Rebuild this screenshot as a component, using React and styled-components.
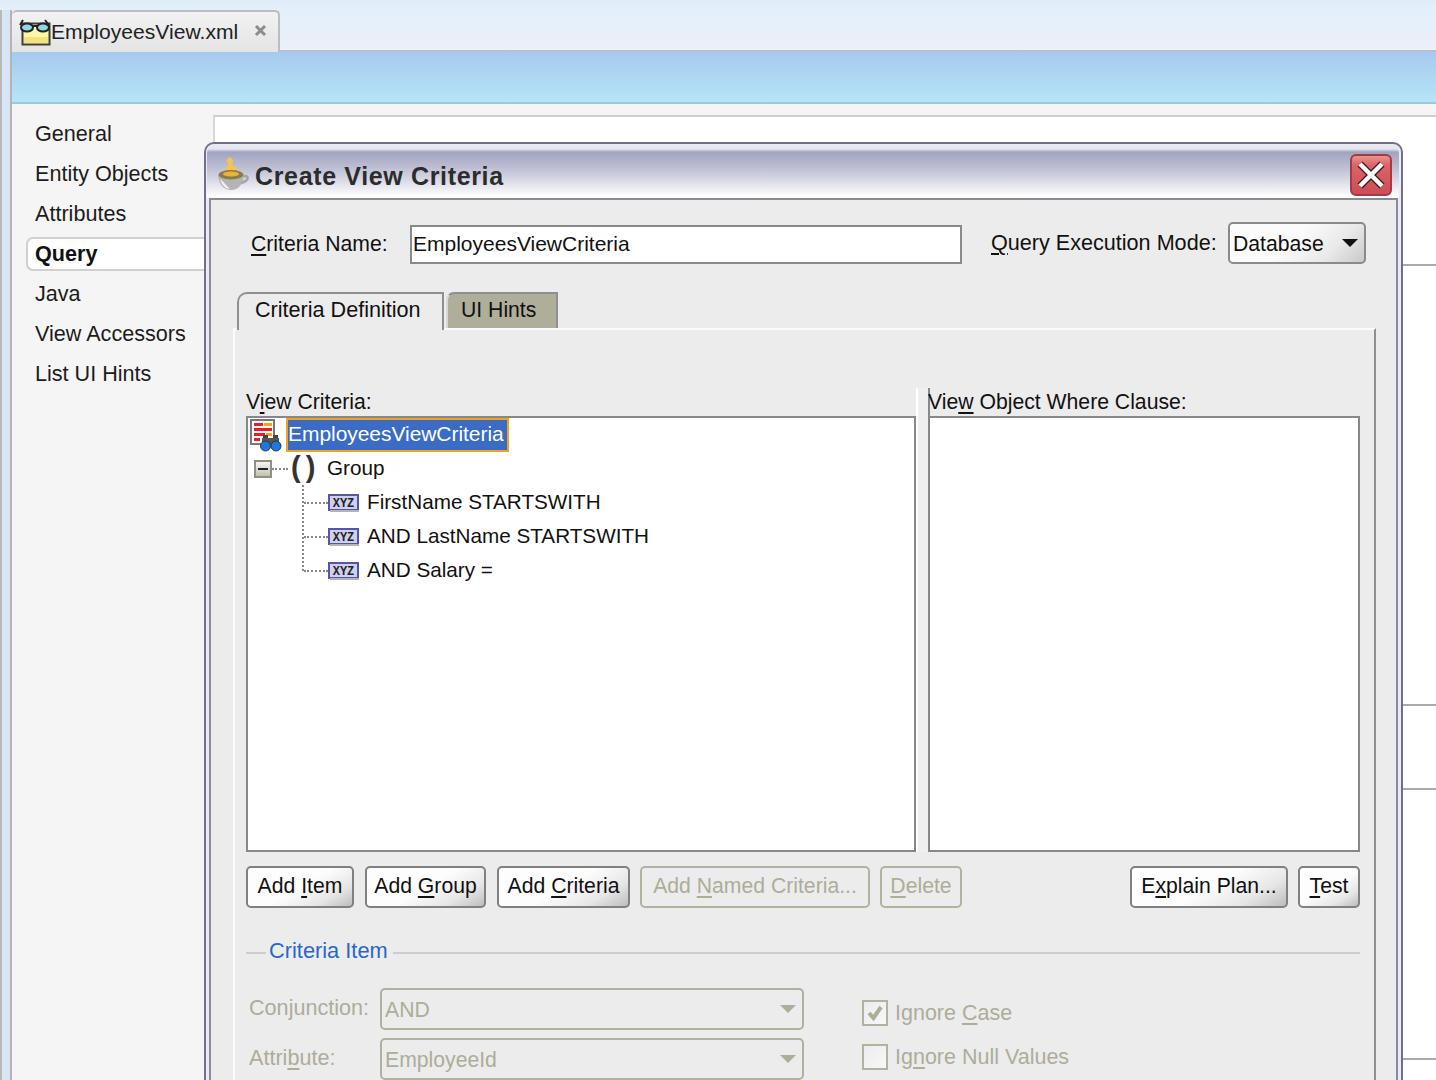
import React from "react";
import styled, { createGlobalStyle } from "styled-components";

const Global = createGlobalStyle`
  html, body { margin: 0; padding: 0; background: #f5f5f5; }
  body { width: 1436px; height: 1080px; overflow: hidden; font-family: "Liberation Sans", Arial, sans-serif; font-size: 21.2px; color: #111; }
  * { box-sizing: border-box; }
  u { text-underline-offset: 3px; text-decoration-thickness: 2px; }
`;

const Page = styled.div`
  position: relative; width: 1436px; height: 1080px; overflow: hidden;
  display: flex; flex-direction: column;
  background: #e2eef9;
`;
const TopStrip = styled.div`height: 10px; background: linear-gradient(#dfecf8, #e4eff9); flex: none;`;
const Shell = styled.div`flex: 1; display: flex; min-height: 0;`;
const Rail = styled.div`
  width: 12px; flex: none; background: #d6e6f7;
  border-left: 2px solid #b9b9b9; border-right: 2px solid #b4b4b4;
`;
const Main = styled.div`flex: 1; display: flex; flex-direction: column; min-width: 0;`;
const TabStrip = styled.div`height: 42px; flex: none; display: flex; background: linear-gradient(#e4eff9, #e9f1fa); border-bottom: 2px solid #b8c0c8;`;
const FileTab = styled.div`
  width: 268px; height: 42px; flex: none; display: flex; align-items: center;
  padding: 0 0 0 7px; background: linear-gradient(#f2f2f2, #e4e4e4);
  border: 2px solid #bdbdbd; border-bottom: none; border-left: none; border-radius: 5px 5px 0 0;
  font-size: 21.1px; color: #222;
`;
const FileName = styled.span`margin-left: 0;`;
const TabClose = styled.svg`margin-left: 16px; margin-top: -4px;`;
const Band = styled.div`height: 52px; flex: none; background: linear-gradient(#a6caee, #b6e5f7); border-bottom: 2px solid #9cc8e6;`;
const Editor = styled.div`flex: 1; display: grid; grid-template-columns: 201px 1fr; background: #f5f5f5; min-height: 0;`;
const Nav = styled.nav`padding-top: 10px; display: flex; flex-direction: column; font-size: 21.6px;`;
const NavItem = styled.div`
  height: 40px; display: flex; align-items: center; padding-left: 23px; color: #1c1c1c;
`;
const NavSelected = styled.div`
  height: 34px; margin: 3px 0 3px 14px; display: flex; align-items: center; padding-left: 7px;
  background: #fff; border: 2px solid #d0d0d0; border-right: none; border-radius: 7px 0 0 7px;
  font-weight: 700; color: #111;
`;
const Canvas = styled.div`
  margin-top: 11px; background: #fff; border-top: 2px solid #cfcfcf; border-left: 2px solid #d8d8d8;
`;
const CanvasRow = styled.div`
  height: ${p => p.$h}px; border-bottom: 2px solid #ababab;
`;

const Dialog = styled.section`
  position: absolute; left: 204px; top: 142px; width: 1199px; height: 960px;
  background: #eaeaf0; border: 2px solid #6f7091; border-bottom: none;
  border-radius: 10px 10px 0 0; padding: 2px 2px 0 1px; display: flex; flex-direction: column;
`;
const TitleBar = styled.header`
  height: 52px; flex: none; display: flex; align-items: center; padding: 6px 7px 0 9px;
  background: linear-gradient(#e6e6ef 0, #e6e6ef 3px, #a2a3bf 6px, #c2c3d6 24px, #f4f4f8 46px, #fff 50px);
  border-radius: 7px 7px 0 0;
`;
const Title = styled.h1`
  margin: 2px 0 0 5px; flex: 1; font-size: 25px; font-weight: 700; letter-spacing: 0.65px; color: #2c2c2c;
`;
const Body = styled.div`
  flex: 1; margin: 0 1px 0 2px; background: #ececec; border: 2px solid #8b8ba3; border-right-color: #8a8a9e; border-bottom: none;
  border-top-color: #8a8a90; min-height: 0; padding-top: 22px; overflow: hidden;
`;
const NameRow = styled.div`display: flex; align-items: center; height: 42px; padding-left: 40px;`;
const NameLabel = styled.label`width: ${p => p.$w}px; flex: none; white-space: pre; margin-left: ${p => p.$ml || 0}px; margin-top: ${p => p.$mt || 0}px; font-size: ${p => p.$fs || 21.2}px;`;
const TextInput = styled.div`
  width: 552px; height: 39px; margin-top: 3px; background: #fff; border: 2px solid #8a8a8a; display: flex; align-items: center; padding: 0 0 1px 1px; font-size: 21px;
`;
const Combo = styled.div`
  width: ${p => p.$w}px; height: 42px; flex: none; display: flex; align-items: center; justify-content: space-between;
  margin-left: ${p => p.$ml || 0}px;
  padding: 2px 6px 0 3px;
  border: 2px solid ${p => p.$off ? "#b0b09c" : "#8a8a8a"}; border-radius: 5px;
  color: ${p => p.$off ? "#adad9a" : "#111"};
  background: ${p => p.$off ? "#ececec" : "linear-gradient(135deg, #fbfbfb 45%, #e9e9e9 75%, #c9c9c9 100%)"};
`;
const Arrow = styled.i`
  width: 0; height: 0; margin-top: -3px; display: block;
  border-left: 8px solid transparent; border-right: 8px solid transparent;
  border-top: 8px solid ${p => p.$off ? "#adad9a" : "#111"};
`;
const TabPaneWrap = styled.div`margin: 28px 0 0 22px; width: 1143px;`;
const Tabs = styled.div`display: flex; height: 36px; padding-left: 4px;`;
const DefTab = styled.div`
  width: 207px; display: flex; align-items: center; padding: 0 0 4px 16px; background: #ececec; font-size: 21.6px;
  border-top: 2px solid #8f8f8f; border-left: 2px solid #8f8f8f; border-right: 2px solid #8f8f8f;
  border-top-left-radius: 10px; position: relative; z-index: 1; margin-bottom: -2px; height: 38px;
`;
const HintTab = styled.div`
  width: 112px; height: 36px; margin-left: 2px; display: flex; align-items: center; padding: 0 0 2px 13px; background: #aeae9b;
  border-top: 2px solid #8f8f8f; border-left: 2px solid #d8d8d8; border-right: 2px solid #8f8f8f;
  border-top-left-radius: 8px;
`;
const Pane = styled.div`
  height: 760px; border-top: 2px solid #fbfbfb; border-left: 2px solid #fbfbfb; border-right: 2px solid #8f8f8f;
  padding: 58px 15px 0 11px;
`;
const Split = styled.div`display: grid; grid-template-columns: 670px 12px 432px; height: 464px;`;
const Column = styled.div`display: flex; flex-direction: column; min-width: 0;`;
const PanelLabel = styled.div`height: 28px; flex: none; white-space: pre; padding-top: 2px; margin-left: ${p => p.$ml || 0}px;`;
const Divider = styled.div`background: #efefef; border-left: 2px solid #fff;`;
const RightColumn = styled(Column)`border-left: 2px solid #888;`;
const TreeBox = styled.div`flex: 1; background: #fff; border: 2px solid #888;`;
const WhereBox = styled.div`flex: 1; background: #fff; border: 2px solid #888; border-left: none;`;
const TreeRow = styled.div`height: 34px; display: flex; align-items: center; white-space: pre; font-size: 20.7px;`;
const RowText = styled.span`margin: -2px 0 0 ${p => p.$ml || 0}px;`;
const RootIcon = styled.svg`margin-left: 1px; flex: none;`;
const SelLabel = styled.div`
  margin-left: 4px; height: 34px; width: 223px; display: flex; align-items: center; padding: 0 0 2px 0;
  background: #3a6cc6; border: 2px solid #f0a31f; color: #fff; font-size: 21px; letter-spacing: -0.05px;
`;
const Expander = styled.div`
  margin-left: 6px; width: 18px; height: 18px; flex: none; border: 2px solid #8f8f85; background: linear-gradient(#f6f6f0, #c4c0b0);
  display: flex; align-items: center; justify-content: center;
  &::before { content: ""; width: 10px; height: 2px; background: #222; }
`;
const HDots = styled.div`width: ${p => p.$w}px; height: 0; flex: none; border-top: 2px dotted #888;`;
const Parens = styled.span`margin: -4px 0 0 3px; width: 36px; flex: none; font-size: 29px; line-height: 30px; letter-spacing: -1.5px; color: #333; white-space: pre; font-weight: 700;`;
const Branch = styled.div`
  margin-left: 54px; position: relative; padding-left: 2px;
  &::before { content: ""; position: absolute; left: 0; top: -1px; height: 86px; border-left: 2px dotted #888; pointer-events: none; }
`;
const XyzIcon = styled.svg`flex: none;`;
const ButtonRow = styled.div`display: flex; gap: 11px; margin-top: 14px; width: 1114px; height: 42px;`;
const Btn = styled.div`
  width: ${p => p.$w}px; height: 42px; flex: none; display: flex; align-items: center; justify-content: center; white-space: pre;
  padding-bottom: 2px;
  margin-left: ${p => p.$push ? "auto" : p.$nudge ? "-1px" : 0};
  border: 2px solid ${p => p.$off ? "#b2b2a0" : "#808080"}; border-radius: 5px;
  color: ${p => p.$off ? "#adad9a" : "#111"};
  background: ${p => p.$off ? "#ececec" : "linear-gradient(150deg, #fdfdfd 50%, #e6e6e6 78%, #bdbdbd 100%)"};
`;
const Legend = styled.div`display: flex; align-items: center; margin-top: 30px; width: 1114px; height: 28px;`;
const LegendLine = styled.div`height: 2px; background: #cdcdcd; flex: ${p => p.$w ? `0 0 ${p.$w}px` : 1}; margin-top: 2px;`;
const LegendText = styled.span`color: #2a66c8; margin: -3px 5px 0 3px; font-size: 21.8px;`;
const Fields = styled.div`display: grid; grid-template-columns: 134px 424px 58px 1fr; grid-auto-rows: 50px; margin-top: 22px; align-items: start;`;
const FieldLabel = styled.div`color: #adad9a; height: 42px; white-space: pre; line-height: 42px; padding-left: 3px; margin-top: -1px; font-size: 21.6px;`;
const CheckRow = styled.div`display: flex; align-items: center; grid-column: 4; color: #adad9a; height: 28px; white-space: pre; margin-top: ${p => p.$mt}px; font-size: 21.5px;`;
const CheckBox = styled.div`
  width: 26px; height: 26px; flex: none; border: 2px solid #b2b2a0; margin-right: 7px; display: flex; align-items: center; justify-content: center;
  background: linear-gradient(135deg, #ececec, #f8f8f8);
`;

const GlassesDoc = () => (
  <svg width="32" height="30" viewBox="0 0 32 30" style={{ flex: "none" }}>
    <rect x="3.5" y="6.5" width="27" height="21" fill="#fdf6a8" stroke="#3f3f3f" strokeWidth="2" />
    <rect x="5" y="20" width="24" height="6" fill="#f4e27c" />
    <path d="M1 8 L4 3 M30 8 L26 3 M10 9 L22 9" stroke="#222" strokeWidth="2" fill="none" />
    <ellipse cx="8" cy="10.5" rx="6" ry="4" fill="#8fd8e8" stroke="#222" strokeWidth="2" />
    <ellipse cx="24" cy="10.5" rx="6" ry="4" fill="#8fd8e8" stroke="#222" strokeWidth="2" />
  </svg>
);

const CloseX = () => (
  <TabClose width="13" height="13" viewBox="0 0 13 13">
    <path d="M2 2 L11 11 M11 2 L2 11" stroke="#8c8c8c" strokeWidth="3" />
  </TabClose>
);

const Cup = () => (
  <svg width="34" height="34" viewBox="0 0 34 34" style={{ flex: "none", marginTop: -2 }}>
    <path d="M13 0 C22 4 12 6 19 10 C22 12 20 15 19 17 L9 17 C6 11 17 8 10 4 Z" fill="#f4c650" />
    <ellipse cx="15" cy="18" rx="12.5" ry="5" fill="#8d7a4c" />
    <ellipse cx="15" cy="17" rx="8" ry="2.5" fill="#e8b53a" />
    <path d="M2 18 C3 28 8 33 15 33 C22 33 27 28 28 18 C24 24 6 24 2 18 Z" fill="#b4b4b4" />
    <path d="M4 22 C6 29 10 32 14 32 C10 28 8 25 4 22 Z" fill="#f0f0f0" />
    <path d="M27 19 C34 18 33 24 25 26" stroke="#a5a5a5" strokeWidth="2.5" fill="none" />
  </svg>
);

const CloseButton = () => (
  <svg width="42" height="42" viewBox="0 0 42 42" style={{ flex: "none" }}>
    <defs>
      <linearGradient id="cb" x1="0" y1="0" x2="0" y2="1">
        <stop offset="0" stopColor="#ec9a90" />
        <stop offset="0.25" stopColor="#dc6466" />
        <stop offset="1" stopColor="#cd4c55" />
      </linearGradient>
    </defs>
    <rect x="1" y="1" width="40" height="40" rx="5" fill="url(#cb)" stroke="#a33a46" strokeWidth="2" />
    <path d="M10 10 L32 32 M32 10 L10 32" stroke="#3a1a1c" strokeWidth="7" />
    <path d="M10 10 L32 32 M32 10 L10 32" stroke="#fff" strokeWidth="4.5" />
  </svg>
);

const CriteriaIcon = () => (
  <RootIcon width="33" height="33" viewBox="0 0 33 33">
    <rect x="2" y="1" width="23" height="24" fill="#fff" stroke="#777" strokeWidth="2" />
    <rect x="5" y="4" width="9" height="3" fill="#ee1c1c" />
    <rect x="15" y="4" width="8" height="3" fill="#f7a11a" />
    <rect x="5" y="9" width="18" height="3" fill="#ee1c1c" />
    <rect x="5" y="14" width="11" height="3" fill="#ee1c1c" />
    <rect x="17" y="14" width="6" height="3" fill="#f7a11a" />
    <rect x="5" y="19" width="6" height="3" fill="#ee1c1c" />
    <rect x="14" y="16" width="5" height="7" fill="#444" />
    <rect x="24" y="16" width="5" height="7" fill="#444" />
    <rect x="13" y="19" width="17" height="6" fill="#555" />
    <circle cx="16.5" cy="27" r="5" fill="#1c78e0" stroke="#333" strokeWidth="1" />
    <circle cx="27" cy="27" r="5" fill="#1c78e0" stroke="#333" strokeWidth="1" />
  </RootIcon>
);

const Xyz = () => (
  <XyzIcon width="32" height="20" viewBox="0 0 32 20">
    <rect x="1" y="2" width="29" height="15" fill="#cfd0ee" stroke="#5656a8" strokeWidth="2" />
    <rect x="2" y="17" width="29" height="2" fill="#b4b4b4" />
    <text x="15.5" y="14" textAnchor="middle" fontFamily="Liberation Mono, monospace" fontWeight="700" fontSize="12" fill="#222">XYZ</text>
  </XyzIcon>
);

const Tick = () => (
  <svg width="18" height="18" viewBox="0 0 18 18">
    <path d="M3 9 L7.5 14 L15 3" stroke="#adad9a" strokeWidth="4" fill="none" />
  </svg>
);

const nav = ["General", "Entity Objects", "Attributes"];
const navAfter = ["Java", "View Accessors", "List UI Hints"];
const items = ["FirstName STARTSWITH", "AND LastName STARTSWITH", "AND Salary ="];

export default function App() {
  return (
    <Page>
      <Global />
      <TopStrip />
      <Shell>
        <Rail />
        <Main>
          <TabStrip>
            <FileTab>
              <GlassesDoc />
              <FileName>EmployeesView.xml</FileName>
              <CloseX />
            </FileTab>
          </TabStrip>
          <Band />
          <Editor>
            <Nav>
              {nav.map(n => <NavItem key={n}>{n}</NavItem>)}
              <NavSelected>Query</NavSelected>
              {navAfter.map(n => <NavItem key={n}>{n}</NavItem>)}
            </Nav>
            <Canvas>
              <CanvasRow $h={149} />
              <CanvasRow $h={440} />
              <CanvasRow $h={84} />
              <CanvasRow $h={270} />
            </Canvas>
          </Editor>
        </Main>
      </Shell>

      <Dialog>
        <TitleBar>
          <Cup />
          <Title>Create View Criteria</Title>
          <CloseButton />
        </TitleBar>
        <Body>
          <NameRow>
            <NameLabel $w={159} $mt={2}><u>C</u>riteria Name:</NameLabel>
            <TextInput>EmployeesViewCriteria</TextInput>
            <NameLabel $w={225} $ml={29} $fs={21.6}><u>Q</u>uery Execution Mode:</NameLabel>
            <Combo $w={138} $ml={12}>Database<Arrow /></Combo>
          </NameRow>
          <TabPaneWrap>
            <Tabs>
              <DefTab>Criteria Definition</DefTab>
              <HintTab>UI Hints</HintTab>
            </Tabs>
            <Pane>
              <Split>
                <Column>
                  <PanelLabel>V<u>i</u>ew Criteria:</PanelLabel>
                  <TreeBox>
                    <TreeRow>
                      <CriteriaIcon />
                      <SelLabel>EmployeesViewCriteria</SelLabel>
                    </TreeRow>
                    <TreeRow>
                      <Expander />
                      <HDots $w={16} />
                      <Parens>( )</Parens>
                      <RowText>Group</RowText>
                    </TreeRow>
                    <Branch>
                      {items.map(t => (
                        <TreeRow key={t}>
                          <HDots $w={24} />
                          <Xyz />
                          <RowText $ml={7}>{t}</RowText>
                        </TreeRow>
                      ))}
                    </Branch>
                  </TreeBox>
                </Column>
                <Divider />
                <RightColumn>
                  <PanelLabel $ml={-2}>Vie<u>w</u> Object Where Clause:</PanelLabel>
                  <WhereBox />
                </RightColumn>
              </Split>
              <ButtonRow>
                <Btn $w={108}><span>Add <u>I</u>tem</span></Btn>
                <Btn $w={121}><span>Add <u>G</u>roup</span></Btn>
                <Btn $w={133}><span>Add <u>C</u>riteria</span></Btn>
                <Btn $w={230} $off $nudge><span>Add <u>N</u>amed Criteria...</span></Btn>
                <Btn $w={82} $off $nudge><span><u>D</u>elete</span></Btn>
                <Btn $w={158} $push><span>E<u>x</u>plain Plan...</span></Btn>
                <Btn $w={62} $nudge><span><u>T</u>est</span></Btn>
              </ButtonRow>
              <Legend>
                <LegendLine $w={20} />
                <LegendText>Criteria Item</LegendText>
                <LegendLine />
              </Legend>
              <Fields>
                <FieldLabel>Con<u>j</u>unction:</FieldLabel>
                <Combo $w={424} $off>AND<Arrow $off /></Combo>
                <div />
                <CheckRow $mt={11}><CheckBox><Tick /></CheckBox><span>Ignore <u>C</u>ase</span></CheckRow>
                <FieldLabel>Attri<u>b</u>ute:</FieldLabel>
                <Combo $w={424} $off>EmployeeId<Arrow $off /></Combo>
                <div />
                <CheckRow $mt={5}><CheckBox /><span>Ig<u>n</u>ore Null Values</span></CheckRow>
              </Fields>
            </Pane>
          </TabPaneWrap>
        </Body>
      </Dialog>
    </Page>
  );
}
